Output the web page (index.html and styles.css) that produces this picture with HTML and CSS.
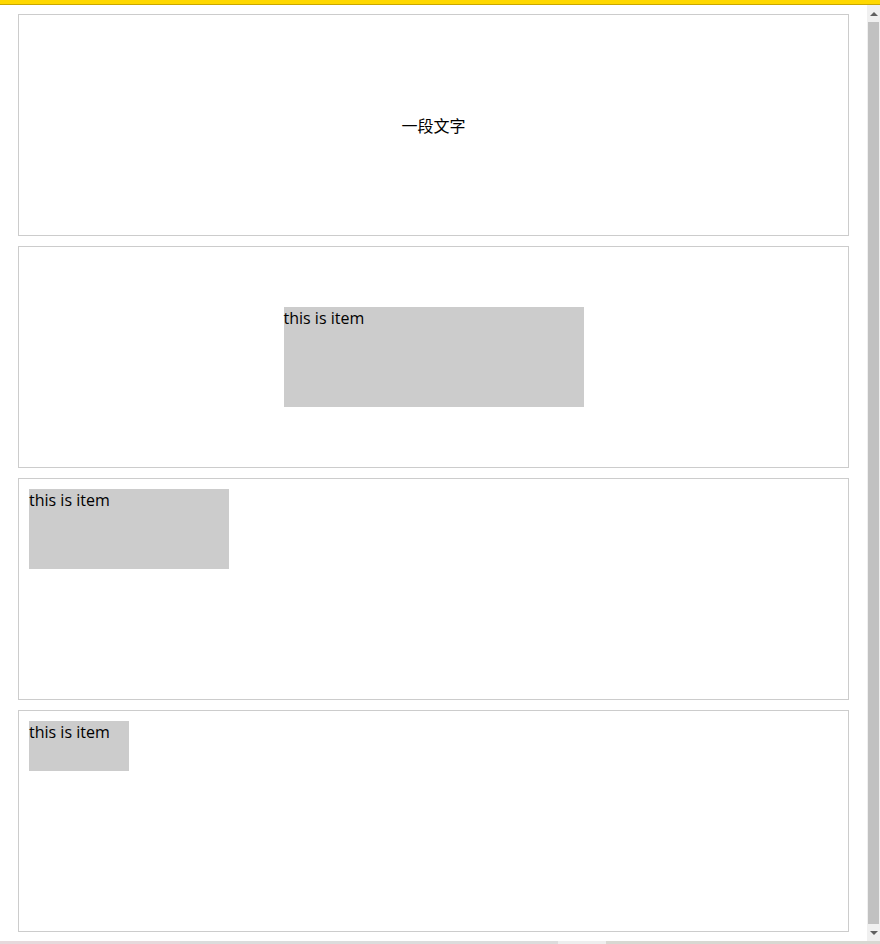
FILE: index.html
```html
<!DOCTYPE html>
<html lang="zh">
<head>
<meta charset="utf-8">
<title>flex demo</title>
<link rel="stylesheet" href="styles.css">
</head>
<body>
<div class="topbar"></div>
<div class="frame">
  <main class="page">
    <section class="box center">
      <span class="label">一段文字</span>
    </section>
    <section class="box center">
      <div class="item item-lg">this is item</div>
    </section>
    <section class="box">
      <div class="item item-md">this is item</div>
    </section>
    <section class="box">
      <div class="item item-sm">this is item</div>
    </section>
  </main>
  <div class="scrollbar">
    <div class="sb-btn"><span class="arrow-up"></span></div>
    <div class="sb-track"><div class="sb-thumb"></div></div>
    <div class="sb-btn"><span class="arrow-down"></span></div>
  </div>
</div>
<div class="bottomstrip">
  <div class="seg seg1"></div>
  <div class="seg seg2"></div>
  <div class="seg seg3"></div>
  <div class="seg seg4"></div>
</div>
</body>
</html>
```

FILE: styles.css
```css
* { box-sizing: border-box; }
html, body { margin: 0; padding: 0; }
body {
  width: 880px;
  height: 944px;
  overflow: hidden;
  background: #fff;
  font-family: "Segoe UI", "Open Sans", "Noto Sans", "Noto Sans CJK SC", sans-serif;
  color: #000;
}
.topbar {
  height: 5px;
  background: #ffd800;
  border-bottom: 1px solid #c9a700;
}
.frame {
  display: flex;
  height: 936px;
}
.page {
  flex: 1;
  display: flex;
  flex-direction: column;
  gap: 10px;
  padding: 9px 18px 0 18px;
  overflow: hidden;
}
.box {
  height: 222px;
  flex: none;
  border: 1px solid #cccccc;
  padding: 10px;
}
.box.center {
  display: flex;
  align-items: center;
  justify-content: center;
}
.label {
  font-family: "Noto Sans CJK SC", sans-serif;
  font-size: 16px;
  line-height: 22px;
}
.item {
  background: #cccccc;
  font-size: 16px;
  line-height: 22px;
}
.item-lg { width: 300px; height: 100px; }
.item-md { width: 200px; height: 80px; }
.item-sm { width: 100px; height: 50px; }

.scrollbar {
  width: 13px;
  flex: none;
  background: #f0f0f0;
  display: flex;
  flex-direction: column;
}
.sb-btn {
  height: 17px;
  display: flex;
  align-items: center;
  justify-content: center;
}
.arrow-up {
  width: 0; height: 0;
  border-left: 4px solid transparent;
  border-right: 4px solid transparent;
  border-bottom: 4px solid #606060;
}
.arrow-down {
  width: 0; height: 0;
  border-left: 4px solid transparent;
  border-right: 4px solid transparent;
  border-top: 4px solid #606060;
}
.sb-track {
  flex: 1;
  padding: 0 1px;
}
.sb-thumb {
  height: 100%;
  background: #c1c1c1;
}
.bottomstrip {
  height: 3px;
  display: flex;
}
.seg { height: 3px; }
.seg1 { width: 180px; background: #e6d9dc; }
.seg2 { width: 378px; background: #dcdcdc; }
.seg3 { width: 48px; background: #eeeeee; }
.seg4 { flex: 1; background: #d8d8d2; }
```
